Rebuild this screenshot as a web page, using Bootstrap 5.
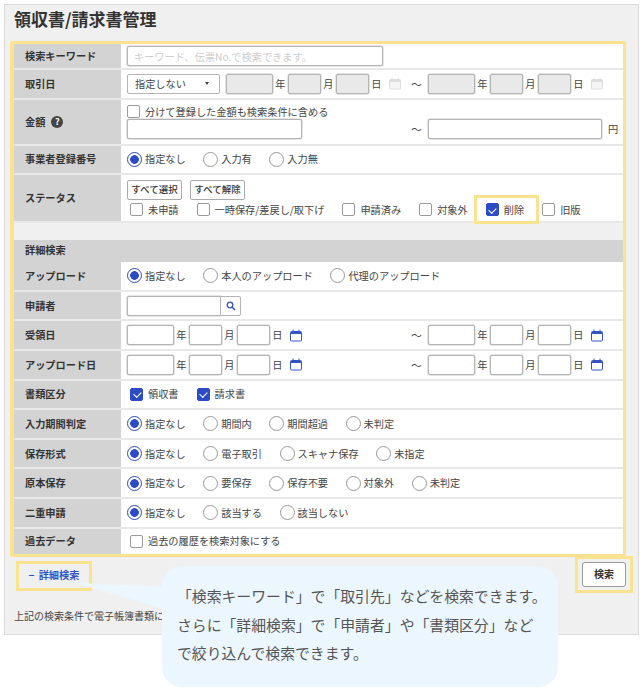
<!doctype html>
<html lang="ja">
  <head>
    <meta charset="utf-8">
    <meta name="viewport" content="width=device-width, initial-scale=1">
    <title>領収書/請求書管理</title>
    <link href="https://cdn.jsdelivr.net/npm/bootstrap@5.3.3/dist/css/bootstrap.min.css" rel="stylesheet">
    <style>
      body {
        font-family: "Noto Sans CJK JP", sans-serif;
        font-size: 10.2px;
        line-height: 14px;
        color: #444;
        background: #fff;
        width: 644px;
        height: 691px;
        overflow: hidden;
        position: relative;
      }
      .panel {
        margin: 4px 0 0 4px;
        width: 635px;
        height: 631px;
        background: #f0f0f0;
        border: 1px solid #dcdcdc;
      }
      .page-title {
        font-size: 17px;
        line-height: 24px;
        font-weight: 700;
        color: #333;
        margin: 0;
        padding: 2px 0 0 9px;
        height: 36px;
      }
      .yellow-frame {
        margin-left: 5px;
        width: 616px;
        border: 3px solid #fbe28f;
        border-left-width: 4px;
        background: #fff;
        border-radius: 2px;
      }
      .srow {
        display: flex;
        height: 29.6px;
        border-bottom: 2px solid #e8e8e8;
      }
      .srow.h-key { height: 26px; }
      .srow.h-amount { height: 46px; }
      .srow.h-status { height: 48px; }
      .srow.h-last { height: 25px; border-bottom: 0; }
      .slabel {
        width: 107px;
        flex: none;
        padding-left: 11px;
        background: #d3d3d3;
        font-weight: 700;
        color: #333;
        display: flex;
        align-items: center;
        gap: 6px;
      }
      .sval {
        flex: 1;
        padding-left: 6px;
        display: flex;
        align-items: center;
        min-width: 0;
      }
      .sval.stack {
        flex-direction: column;
        align-items: flex-start;
        justify-content: center;
      }
      .spacer-band { height: 17px; background: #f0f0f0; }
      .detail-head {
        height: 22px;
        background: #d3d3d3;
        padding: 0 0 2px 11px;
        font-weight: 700;
        color: #333;
        display: flex;
        align-items: center;
      }
      .fld {
        height: 20px;
        border: 1px solid #b4b4b4;
        border-radius: 2px;
        background: #fff;
        box-shadow: 0 0 0 .5px #ccc;
        flex: none;
        padding: 0 6px;
        display: block;
        font-size: 10.2px;
        font-family: inherit;
        color: #444;
      }
      .fld:disabled { background: #e9e9e9; }
      .fld::placeholder { color: #cdcdcd; }
      .w-key { width: 256px; }
      .w-y { width: 46.5px; }
      .w-m { width: 32.5px; }
      .w-amt-l { width: 175px; }
      .w-amt-r { width: 174px; }
      .w-name { width: 94px; border-radius: 2px 0 0 2px; }
      .fake-select {
        width: 93px;
        height: 20px;
        border: 1px solid #b4b4b4;
        border-radius: 2px;
        background: #fff;
        padding: 0 7px;
        flex: none;
        display: flex;
        align-items: center;
        justify-content: space-between;
      }
      .fake-select i {
        border: 2px solid transparent;
        border-top: 3px solid #444;
        border-bottom: 0;
        margin-right: 3px;
      }
      .date-half {
        width: 284px;
        flex: none;
        display: flex;
        align-items: center;
      }
      .date-half.short { width: 185px; margin-left: 6px; }
      .dunit { width: 15.5px; text-align: center; flex: none; }
      .cal-gap { margin-left: 5px; flex: none; display: block; }
      .wave { width: 17px; flex: none; font-size: 11px; }
      .date-right { display: flex; align-items: center; }
      .yen-mark { margin-left: 6px; }
      .search-add {
        width: 21px;
        height: 20px;
        border: 1px solid #b4b4b4;
        border-left-width: 1px;
        margin-left: -1px;
        border-radius: 0 2px 2px 0;
        background: #fff;
        display: flex;
        align-items: center;
        justify-content: center;
        padding: 0;
      }
      .btn-line { margin-bottom: 3px; }
      .amt-check { margin: 0 0 4px 3px; }
      .mini-btn {
        height: 20px;
        width: 55px;
        padding: 0;
        font-size: 9.5px;
        font-weight: 500;
        line-height: 1;
        background: #fff;
        border: 1px solid #aaa;
        border-radius: 2px;
        color: #333;
      }
      .rd, .ck {
        appearance: none;
        display: block;
        flex: none;
        background: #fff;
        margin: 0;
        border: 1px solid #999;
      }
      .rd { width: 15px; height: 15px; border-radius: 50%; }
      .rd:checked {
        border-color: #2c4bc4;
        background: radial-gradient(circle, #2c4bc4 0 4px, #fff 4.6px);
      }
      .ck { width: 13px; height: 13px; border-radius: 2px; }
      .ck:checked { background: #2c4bc4; border-color: #2c4bc4; position: relative; }
      .ck:checked::after {
        content: "";
        position: absolute;
        left: 3.5px;
        top: 1.5px;
        width: 4.5px;
        height: 7px;
        border: solid #fff;
        border-width: 0 1px 1px 0;
        transform: rotate(45deg);
      }
      .rd-item { display: flex; align-items: center; gap: 3px; }
      .rd-group { display: flex; align-items: center; gap: 17.5px; }
      .ck-item { display: flex; align-items: center; gap: 5px; margin: 0; }
      .ck-group { display: flex; align-items: center; gap: 18px; padding-left: 3px; }
      .flag-hl { outline: 3px solid #fbe28f; padding: 5px 12px 4px 9px; margin: -5px -12px -4px -9px; }
      .help-dot {
        width: 12px;
        height: 12px;
        border-radius: 50%;
        background: #444;
        color: #fff;
        font-size: 9px;
        line-height: 12px;
        text-align: center;
      }
      .foot-row { position: relative; height: 36px; }
      .detail-toggle {
        position: absolute;
        left: 11px;
        top: 4px;
        width: 76px;
        height: 30px;
        border: 3px solid #fbe28f;
        display: flex;
        align-items: center;
        justify-content: center;
        padding-bottom: 2px;
        font-weight: 700;
        color: #3554c4;
        text-decoration: none;
        gap: 4px;
      }
      .search-frame {
        position: absolute;
        left: 570px;
        top: -1px;
        width: 58px;
        height: 37px;
        border: 3px solid #fbe28f;
        display: flex;
        align-items: center;
        justify-content: center;
        background: #f0f0f0;
      }
      .search-btn {
        width: 44px;
        height: 25px;
        padding: 0;
        background: #fff;
        border: 1px solid #999;
        border-radius: 3px;
        font-size: 10px;
        font-weight: 700;
        color: #333;
      }
      .note-line { margin: 16px 0 0 9px; white-space: nowrap; font-size: 10px; }
      .callout-tail { position: absolute; left: 0; top: 0; }
      .callout {
        position: absolute;
        left: 162px;
        top: 566px;
        width: 396px;
        height: 121px;
        border-radius: 20px;
        background: #ebf6ff;
        padding: 16px 0 0 15px;
        font-size: 14.85px;
        line-height: 28.7px;
        color: #555;
        white-space: nowrap;
      }
    </style>
  </head>
  <body>
    <div class="panel">
      <h1 class="page-title">領収書/請求書管理</h1>
      <div class="yellow-frame">
        <!-- basic search -->
        <div class="srow h-key">
          <div class="slabel">検索キーワード</div>
          <div class="sval"><input class="fld w-key" type="text" placeholder="キーワード、伝票No.で検索できます。"></div>
        </div>
        <div class="srow">
          <div class="slabel">取引日</div>
          <div class="sval">
            <div class="fake-select"><span>指定しない</span><i></i></div>
            <div class="date-half short">
              <input class="fld w-y" disabled><span class="dunit">年</span>
              <input class="fld w-m" disabled><span class="dunit">月</span>
              <input class="fld w-m" disabled><span class="dunit">日</span>
              <svg class="cal-gap" width="12" height="13" viewBox="0 0 12 13"><path d="M1.5 2.5h9a1 1 0 0 1 1 1v7.500a1 1 0 0 1-1 1h-9a1 1 0 0 1-1-1V3.500a1 1 0 0 1 1-1z" fill="#f4f4f4" stroke="#dcdcdc"/><path d="M1 3h10v2H1z" fill="#dcdcdc"/><path d="M3 .5v2M9 .5v2" stroke="#dcdcdc"/></svg>
            </div>
            <div class="date-right">
              <span class="wave">～</span>
              <input class="fld w-y" disabled><span class="dunit">年</span>
              <input class="fld w-m" disabled><span class="dunit">月</span>
              <input class="fld w-m" disabled><span class="dunit">日</span>
              <svg class="cal-gap" width="12" height="13" viewBox="0 0 12 13"><path d="M1.5 2.5h9a1 1 0 0 1 1 1v7.500a1 1 0 0 1-1 1h-9a1 1 0 0 1-1-1V3.500a1 1 0 0 1 1-1z" fill="#f4f4f4" stroke="#dcdcdc"/><path d="M1 3h10v2H1z" fill="#dcdcdc"/><path d="M3 .5v2M9 .5v2" stroke="#dcdcdc"/></svg>
            </div>
          </div>
        </div>
        <div class="srow h-amount">
          <div class="slabel">金額 <span class="help-dot">?</span></div>
          <div class="sval stack">
            <label class="ck-item amt-check"><input class="ck" type="checkbox"><span>分けて登録した金額も検索条件に含める</span></label>
            <div class="d-flex align-items-center">
              <div class="date-half"><input class="fld w-amt-l" type="text"></div>
              <span class="wave">～</span>
              <input class="fld w-amt-r" type="text"><span class="yen-mark">円</span>
            </div>
          </div>
        </div>
        <div class="srow">
          <div class="slabel">事業者登録番号</div>
          <div class="sval">
            <div class="rd-group">
              <label class="rd-item"><input class="rd" type="radio" name="reg" checked>指定なし</label>
              <label class="rd-item"><input class="rd" type="radio" name="reg">入力有</label>
              <label class="rd-item"><input class="rd" type="radio" name="reg">入力無</label>
            </div>
          </div>
        </div>
        <div class="srow h-status">
          <div class="slabel">ステータス</div>
          <div class="sval stack">
            <div class="d-flex gap-2 btn-line">
              <button class="mini-btn" type="button">すべて選択</button>
              <button class="mini-btn" type="button">すべて解除</button>
            </div>
            <div class="ck-group">
              <label class="ck-item"><input class="ck" type="checkbox">未申請</label>
              <label class="ck-item"><input class="ck" type="checkbox">一時保存/差戻し/取下げ</label>
              <label class="ck-item"><input class="ck" type="checkbox">申請済み</label>
              <label class="ck-item"><input class="ck" type="checkbox">対象外</label>
              <label class="ck-item flag-hl"><input class="ck" type="checkbox" checked>削除</label>
              <label class="ck-item"><input class="ck" type="checkbox">旧版</label>
            </div>
          </div>
        </div>
        <div class="spacer-band"></div>
        <!-- detail search -->
        <div class="detail-head">詳細検索</div>
        <div class="srow">
          <div class="slabel">アップロード</div>
          <div class="sval">
            <div class="rd-group">
              <label class="rd-item"><input class="rd" type="radio" name="up" checked>指定なし</label>
              <label class="rd-item"><input class="rd" type="radio" name="up">本人のアップロード</label>
              <label class="rd-item"><input class="rd" type="radio" name="up">代理のアップロード</label>
            </div>
          </div>
        </div>
        <div class="srow">
          <div class="slabel">申請者</div>
          <div class="sval">
            <input class="fld w-name" type="text">
            <button class="search-add" type="button" aria-label="検索">
              <svg width="10" height="10" viewBox="0 0 10 10"><circle cx="4" cy="4" r="2.800" fill="none" stroke="#3554c4" stroke-width="1.300"/><path d="M6.200 6.200 9 9" stroke="#3554c4" stroke-width="1.600"/></svg>
            </button>
          </div>
        </div>
        <div class="srow">
          <div class="slabel">受領日</div>
          <div class="sval">
            <div class="date-half">
              <input class="fld w-y"><span class="dunit">年</span>
              <input class="fld w-m"><span class="dunit">月</span>
              <input class="fld w-m"><span class="dunit">日</span>
              <svg class="cal-gap" width="12" height="13" viewBox="0 0 12 13"><path d="M1.500 2.500h9a1 1 0 0 1 1 1v7.500a1 1 0 0 1-1 1h-9a1 1 0 0 1-1-1V3.500a1 1 0 0 1 1-1z" fill="#fff" stroke="#3554c4"/><path d="M1 3h10v2H1z" fill="#3554c4"/><path d="M3 .5v2M9 .5v2" stroke="#3554c4"/></svg>
            </div>
            <div class="date-right">
              <span class="wave">～</span>
              <input class="fld w-y"><span class="dunit">年</span>
              <input class="fld w-m"><span class="dunit">月</span>
              <input class="fld w-m"><span class="dunit">日</span>
              <svg class="cal-gap" width="12" height="13" viewBox="0 0 12 13"><path d="M1.500 2.500h9a1 1 0 0 1 1 1v7.500a1 1 0 0 1-1 1h-9a1 1 0 0 1-1-1V3.500a1 1 0 0 1 1-1z" fill="#fff" stroke="#3554c4"/><path d="M1 3h10v2H1z" fill="#3554c4"/><path d="M3 .5v2M9 .5v2" stroke="#3554c4"/></svg>
            </div>
          </div>
        </div>
        <div class="srow">
          <div class="slabel">アップロード日</div>
          <div class="sval">
            <div class="date-half">
              <input class="fld w-y"><span class="dunit">年</span>
              <input class="fld w-m"><span class="dunit">月</span>
              <input class="fld w-m"><span class="dunit">日</span>
              <svg class="cal-gap" width="12" height="13" viewBox="0 0 12 13"><path d="M1.500 2.500h9a1 1 0 0 1 1 1v7.500a1 1 0 0 1-1 1h-9a1 1 0 0 1-1-1V3.500a1 1 0 0 1 1-1z" fill="#fff" stroke="#3554c4"/><path d="M1 3h10v2H1z" fill="#3554c4"/><path d="M3 .5v2M9 .5v2" stroke="#3554c4"/></svg>
            </div>
            <div class="date-right">
              <span class="wave">～</span>
              <input class="fld w-y"><span class="dunit">年</span>
              <input class="fld w-m"><span class="dunit">月</span>
              <input class="fld w-m"><span class="dunit">日</span>
              <svg class="cal-gap" width="12" height="13" viewBox="0 0 12 13"><path d="M1.500 2.500h9a1 1 0 0 1 1 1v7.500a1 1 0 0 1-1 1h-9a1 1 0 0 1-1-1V3.500a1 1 0 0 1 1-1z" fill="#fff" stroke="#3554c4"/><path d="M1 3h10v2H1z" fill="#3554c4"/><path d="M3 .5v2M9 .5v2" stroke="#3554c4"/></svg>
            </div>
          </div>
        </div>
        <div class="srow">
          <div class="slabel">書類区分</div>
          <div class="sval">
            <div class="ck-group">
              <label class="ck-item"><input class="ck" type="checkbox" checked>領収書</label>
              <label class="ck-item"><input class="ck" type="checkbox" checked>請求書</label>
            </div>
          </div>
        </div>
        <div class="srow">
          <div class="slabel">入力期間判定</div>
          <div class="sval">
            <div class="rd-group">
              <label class="rd-item"><input class="rd" type="radio" name="term" checked>指定なし</label>
              <label class="rd-item"><input class="rd" type="radio" name="term">期間内</label>
              <label class="rd-item"><input class="rd" type="radio" name="term">期間超過</label>
              <label class="rd-item"><input class="rd" type="radio" name="term">未判定</label>
            </div>
          </div>
        </div>
        <div class="srow">
          <div class="slabel">保存形式</div>
          <div class="sval">
            <div class="rd-group">
              <label class="rd-item"><input class="rd" type="radio" name="form" checked>指定なし</label>
              <label class="rd-item"><input class="rd" type="radio" name="form">電子取引</label>
              <label class="rd-item"><input class="rd" type="radio" name="form">スキャナ保存</label>
              <label class="rd-item"><input class="rd" type="radio" name="form">未指定</label>
            </div>
          </div>
        </div>
        <div class="srow">
          <div class="slabel">原本保存</div>
          <div class="sval">
            <div class="rd-group">
              <label class="rd-item"><input class="rd" type="radio" name="orig" checked>指定なし</label>
              <label class="rd-item"><input class="rd" type="radio" name="orig">要保存</label>
              <label class="rd-item"><input class="rd" type="radio" name="orig">保存不要</label>
              <label class="rd-item"><input class="rd" type="radio" name="orig">対象外</label>
              <label class="rd-item"><input class="rd" type="radio" name="orig">未判定</label>
            </div>
          </div>
        </div>
        <div class="srow">
          <div class="slabel">二重申請</div>
          <div class="sval">
            <div class="rd-group">
              <label class="rd-item"><input class="rd" type="radio" name="dup" checked>指定なし</label>
              <label class="rd-item"><input class="rd" type="radio" name="dup">該当する</label>
              <label class="rd-item"><input class="rd" type="radio" name="dup">該当しない</label>
            </div>
          </div>
        </div>
        <div class="srow h-last">
          <div class="slabel">過去データ</div>
          <div class="sval">
            <div class="ck-group">
              <label class="ck-item"><input class="ck" type="checkbox">過去の履歴を検索対象にする</label>
            </div>
          </div>
        </div>
      </div>
      <div class="foot-row">
        <a class="detail-toggle" href="#"><span>−</span>詳細検索</a>
        <div class="search-frame"><button class="search-btn" type="button">検索</button></div>
      </div>
      <p class="note-line">上記の検索条件で電子帳簿書類に</p>
    </div>

    <!-- callout over the page -->
    <svg class="callout-tail" width="644" height="691" viewBox="0 0 644 691"><path d="M76 583 L170 587 L170 611 Z" fill="#ebf6ff"/></svg>
    <div class="callout">
      「検索キーワード」で「取引先」などを検索できます。<br>
      さらに「詳細検索」で「申請者」や「書類区分」など<br>
      で絞り込んで検索できます。
    </div>

    <script src="https://cdn.jsdelivr.net/npm/bootstrap@5.3.3/dist/js/bootstrap.bundle.min.js"></script>
  </body>
</html>
